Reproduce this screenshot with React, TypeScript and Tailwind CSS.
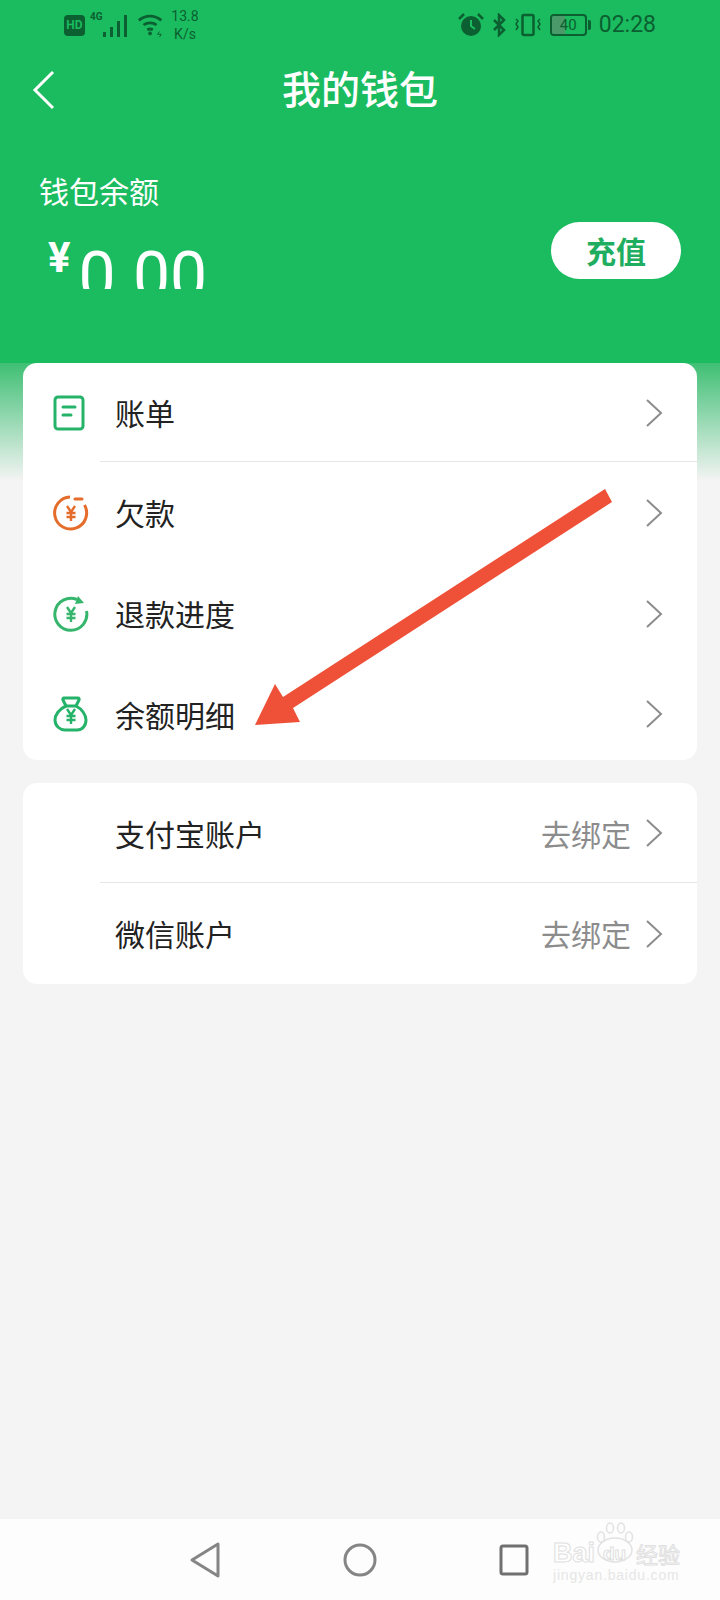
const cjk = "font-['Noto_Sans_CJK_SC','Noto_Sans',sans-serif]"

function StatusBar() {
  return (
    <div className="h-[50px] flex items-center justify-between pl-[64px] pr-[64px] text-[#0b5f30]">
      <div className="flex items-center gap-[5px]">
        <div className="w-[21px] h-[21px] rounded-[4px] bg-[#0b5f30] text-[#1abc5f] text-[12px] font-bold leading-[21px] text-center font-['Roboto',sans-serif]">
          HD
        </div>
        <svg width="42" height="30" viewBox="0 0 42 30" fill="currentColor">
          <text x="0" y="10" fontSize="10" fontWeight="700" fontFamily="Roboto">4G</text>
          <rect x="13" y="22" width="3" height="5" />
          <rect x="20" y="17" width="3" height="10" />
          <rect x="27" y="11" width="3" height="16" />
          <rect x="34" y="5" width="3" height="22" />
        </svg>
        <svg width="28" height="26" viewBox="0 0 30 26" fill="none" stroke="currentColor" strokeWidth="3">
          <path d="M2 8c7-6 17-6 24 0" />
          <path d="M7 13c4-3 10-3 14 0" />
          <path d="M11 18c2-1 4-1 6 0" />
          <circle cx="14" cy="22" r="2" fill="currentColor" stroke="none" />
          <path d="M24 20l-2 3h4l-2 3" strokeWidth="1" />
        </svg>
        <div className="w-[30px] text-[14px] leading-[18px] text-center font-['Roboto',sans-serif]">
          13.8
          <br />
          K/s
        </div>
      </div>
      <div className="flex items-center gap-[7px]">
        <svg width="26" height="26" viewBox="0 0 26 26" fill="currentColor">
          <circle cx="13" cy="14" r="10" />
          <path d="M1 7l5-5M25 7l-5-5" stroke="currentColor" strokeWidth="2.5" />
          <path d="M13 8v6l4 3" stroke="#1abc5f" strokeWidth="2" fill="none" />
        </svg>
        <svg width="16" height="24" viewBox="0 0 14 24" fill="none" stroke="currentColor" strokeWidth="2.5">
          <path d="M2 7l10 10-5 5V2l5 5L2 17" />
        </svg>
        <svg width="28" height="24" viewBox="0 0 28 24" fill="none" stroke="currentColor" strokeWidth="2.5">
          <rect x="8.500" y="2" width="11" height="20" rx="1.500" />
          <path d="M2 6l2 2-2 3 2 3-2 3M26 6l-2 2 2 3-2 3 2 3" strokeWidth="1.500" />
        </svg>
        <div className="ml-[1px] flex items-center gap-[1px]">
          <div className="relative w-[37px] h-[22px] rounded-[4px] border-2 border-[#0b5f30] overflow-hidden text-center text-[15px] leading-[18px] font-['Roboto',sans-serif]">
            <div className="absolute left-0 top-0 bottom-0 w-[13px] bg-[#4a9a6a]" />
            <span className="relative">40</span>
          </div>
          <div className="w-[3px] h-[10px] rounded-r-[2px] bg-[#0b5f30]" />
        </div>
        <div className="ml-[1px] text-[23px] font-['Roboto',sans-serif]">02:28</div>
      </div>
    </div>
  )
}

function BillIcon() {
  return (
    <svg width="32" height="36" viewBox="0 0 32 36" fill="none" stroke="#25b36a" strokeWidth="3">
      <rect x="2" y="2" width="28" height="32" rx="3" />
      <path d="M10 12h12M10 20h8" strokeLinecap="round" />
    </svg>
  )
}

function Yen({ color }: { color: string }) {
  return (
    <path
      d="M14 11l4 6 4-6M18 17v9M13.500 18h9M13.500 22h9"
      fill="none"
      stroke={color}
      strokeWidth="2.400"
    />
  )
}

function DebtIcon() {
  return (
    <svg width="36" height="36" viewBox="0 0 36 36" fill="none">
      <path d="M31.500 10A16 16 0 1 1 17 2" stroke="#e56d2b" strokeWidth="3" />
      <path d="M22 4h7" stroke="#e56d2b" strokeWidth="3" strokeLinecap="round" />
      <Yen color="#e56d2b" />
    </svg>
  )
}

function RefundIcon() {
  return (
    <svg width="36" height="36" viewBox="0 0 36 36" fill="none">
      <path d="M33.500 15A16 16 0 1 1 24 3.500" stroke="#35b66c" strokeWidth="3" />
      <path d="M25 0l6 7-9 1z" fill="#35b66c" />
      <Yen color="#35b66c" />
    </svg>
  )
}

function BagIcon() {
  return (
    <svg width="36" height="36" viewBox="0 0 36 36" fill="none">
      <path
        d="M11 2h14c1 0 1.500 1 1 2l-3 6c6 3 10 9 10 14 0 6-4 10-9 10H12c-5 0-10-4-10-10 0-5 4-11 11-14l-3-6c-.500-1 0-2 1-2z"
        stroke="#25b36a"
        strokeWidth="3"
        strokeLinejoin="round"
      />
      <path d="M13 10h10" stroke="#25b36a" strokeWidth="3" />
      <g transform="translate(0 2)">
        <Yen color="#25b36a" />
      </g>
    </svg>
  )
}

function Chevron() {
  return (
    <svg width="18" height="30" viewBox="0 0 18 30" fill="none" stroke="#8c8c8c" strokeWidth="2">
      <path d="M2 2l14 13L2 28" />
    </svg>
  )
}

function Row({ icon, label, value, divider, className }: { icon?: React.ReactNode; label: string; value?: string; divider?: boolean; className: string }) {
  return (
    <div className={`relative flex items-center pl-[30px] pr-[34px] ${className}`}>
      <div className="w-[62px] flex items-center">{icon}</div>
      <div className="flex-1 text-[30px] text-[#222]">{label}</div>
      {value && <div className="text-[30px] text-[#8c8c8c] mr-[14px]">{value}</div>}
      <Chevron />
      {divider && <div className="absolute left-[77px] right-0 bottom-0 h-px bg-[#e6e6e6]" />}
    </div>
  )
}

export default function App() {
  return (
    <div className={`relative w-[720px] h-[1600px] flex flex-col overflow-hidden bg-[#f4f4f4] ${cjk}`}>
      <header className="h-[363px] bg-[#1abc5f] flex flex-col text-white">
        <StatusBar />
        <div className="relative h-[80px] pb-[6px] flex items-center justify-center">
          <svg className="absolute left-[32px] top-[20px]" width="24" height="40" viewBox="0 0 24 40" fill="none" stroke="white" strokeWidth="3">
            <path d="M21 2L3 20l18 18" />
          </svg>
          <div className="text-[39px] font-medium">我的钱包</div>
        </div>
        <div className="flex items-start justify-between pl-[39px] pr-[39px] pt-[38px]">
          <div>
            <div className="text-[30px] leading-[44px]">钱包余额</div>
            <div className="h-[55px] mt-[22px] ml-[9px] overflow-hidden flex items-start">
              <span className="text-[42px] leading-[48px] font-bold font-['Roboto',sans-serif]">¥</span>
              <span className="ml-[8px] mt-[4px] text-[66px] leading-[77px] font-normal font-['Roboto',sans-serif]">0.00</span>
            </div>
          </div>
          <div className="mt-[54px] w-[130px] h-[57px] rounded-full bg-white text-[#1fae60] text-[30px] font-bold flex items-center justify-center">
            充值
          </div>
        </div>
      </header>

      <main className="flex-1 flex flex-col gap-[23px] px-[23px] bg-[linear-gradient(#3fbf74,#f4f4f4)] bg-no-repeat bg-[length:100%_118px]">
        <section className="bg-white rounded-[14px] overflow-hidden">
          <Row className="h-[99px]" icon={<BillIcon />} label="账单" divider />
          <Row className="h-[101px]" icon={<DebtIcon />} label="欠款" />
          <Row className="h-[101px]" icon={<RefundIcon />} label="退款进度" />
          <Row className="h-[96px] pt-[4px]" icon={<BagIcon />} label="余额明细" />
        </section>
        <section className="bg-white rounded-[14px] overflow-hidden">
          <Row className="h-[100px]" label="支付宝账户" value="去绑定" divider />
          <Row className="h-[101px]" label="微信账户" value="去绑定" />
        </section>
      </main>

      <nav className="h-[81px] bg-[#fdfdfd] flex items-center pl-[189px]">
        <div className="flex items-center gap-[122px]">
          <svg width="32" height="38" viewBox="0 0 32 38" fill="none" stroke="#858585" strokeWidth="3" strokeLinejoin="round">
            <path d="M29 3v32L3 19z" />
          </svg>
          <svg width="34" height="34" viewBox="0 0 34 34" fill="none" stroke="#858585" strokeWidth="3">
            <circle cx="17" cy="17" r="15" />
          </svg>
          <svg width="30" height="32" viewBox="0 0 30 32" fill="none" stroke="#707070" strokeWidth="3" strokeLinejoin="round">
            <rect x="2" y="2" width="26" height="28" rx="2" />
          </svg>
        </div>
      </nav>

      {/* watermark */}
      <div className="absolute left-[553px] top-[1522px] w-[130px] h-[70px]">
        <svg className="absolute left-[42px] top-0" width="40" height="42" viewBox="0 0 40 42" fill="none" stroke="#e2e2e2" strokeWidth="1.500">
          <ellipse cx="6" cy="15" rx="3.500" ry="5" />
          <ellipse cx="15" cy="6" rx="3.500" ry="5" />
          <ellipse cx="26" cy="6" rx="3.500" ry="5" />
          <ellipse cx="34" cy="15" rx="3.500" ry="5" />
          <ellipse cx="20" cy="28" rx="17" ry="12" />
        </svg>
        <div className="absolute left-0 top-[15px] text-[27px] leading-[32px] font-bold text-white [-webkit-text-stroke:1px_#e0e0e0] font-['Liberation_Sans',sans-serif] whitespace-nowrap">
          Bai
        </div>
        <div className="absolute left-[50px] top-[20px] text-[19px] leading-[24px] font-bold text-white [-webkit-text-stroke:1px_#e0e0e0] font-['Liberation_Sans',sans-serif] whitespace-nowrap">
          du
        </div>
        <div className="absolute left-[83px] top-[17px] text-[22px] leading-[28px] text-white [-webkit-text-stroke:1px_#e0e0e0] whitespace-nowrap">经验</div>
        <div className="absolute left-0 top-[44px] text-[14px] leading-[18px] tracking-[0.8px] text-[#e6e6e6] font-['Liberation_Sans',sans-serif] whitespace-nowrap">jingyan.baidu.com</div>
      </div>

      {/* red annotation arrow */}
      <svg className="absolute left-0 top-0 pointer-events-none" width="720" height="800" viewBox="0 0 720 800" fill="none">
        <path d="M605 489L612 502L293 708L300 722L255 725L275 684L283 697z" fill="#ef5138" />
      </svg>
    </div>
  )
}
